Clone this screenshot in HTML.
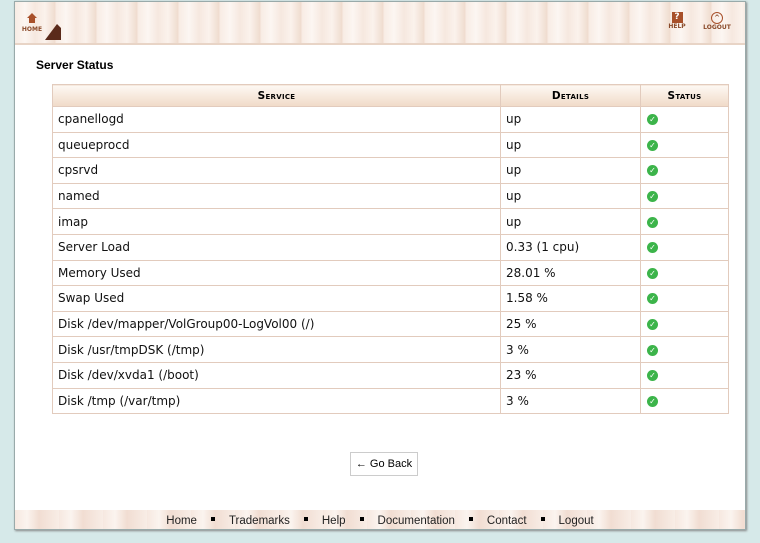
<!DOCTYPE html>
<html><head><style>
body{margin:0;background:#d6e9e9;font-family:"DejaVu Sans","Liberation Sans",sans-serif;width:760px;height:543px;overflow:hidden;position:relative}
.wrap{position:absolute;left:14px;top:1px;width:730px;height:527px;background:#fff;border:1px solid #9aa;box-shadow:1px 1px 2px #888}
.hdr{position:absolute;left:0;top:0;width:730px;height:41px;background:repeating-linear-gradient(90deg,#f8ece4 0,#fcf6f2 10px,#f6e8df 20px,#fbf2ec 30px,#efdccf 40px,#f8ece4 41px);border-bottom:2px solid #e8d4c6}
.ic{position:absolute;font-size:6px;font-weight:bold;color:#8a4a2a;text-align:center}
h1{position:absolute;left:21px;top:56px;margin:0;font-size:12px;font-weight:bold;color:#000;font-family:"Liberation Sans",sans-serif}
table{position:absolute;left:37px;top:82px;width:677px;border-collapse:collapse;font-size:12px}
th{height:21px;background:linear-gradient(#fdf8f3,#f0dac8);font-size:10.5px;font-variant:small-caps;border:1px solid #e2cbbd;padding:0;letter-spacing:.3px}
td{height:24.6px;border:1px solid #e2cbbd;padding:0 0 0 5px;color:#111}
.ok{display:inline-block;width:11px;height:11px;border-radius:50%;background:#3cb44a;color:#fff;font-size:8px;line-height:11px;text-align:center;margin-left:1px;vertical-align:middle}
.btn{position:absolute;left:335px;top:450px;width:66px;height:22px;border:1px solid #ccc;font-size:11px;line-height:22px;text-align:center;font-family:"Liberation Sans",sans-serif}
.ftr{position:absolute;left:0;top:508px;width:730px;height:19px;background:repeating-linear-gradient(90deg,#f6e8e0 0,#fbf4ef 12px,#f1ddd2 24px,#f8ede6 44px);font-size:11.5px;font-family:"Liberation Sans",sans-serif;text-align:center;line-height:22px;color:#222}
.ftr b{display:inline-block;width:4px;height:4px;background:#000;margin:0 14px;vertical-align:3px}
</style></head><body>
<div class="wrap">
<div class="hdr">
<div class="ic" style="left:6px;top:10px;width:22px"><svg width="12" height="12" viewBox="0 0 12 12"><path d="M6 1 1 6h2v5h6V6h2z" fill="#a8502a"/></svg><br>HOME</div>
<svg style="position:absolute;left:30px;top:20px" width="16" height="18"><path d="M0 18 L12 2 L16 6 L16 18Z" fill="#5a2a1a"/></svg>
<div class="ic" style="left:652px;top:10px;width:20px"><div style="width:11px;height:11px;background:#a8502a;color:#fff;font-size:9px;line-height:11px;margin:0 auto">?</div>HELP</div>
<div class="ic" style="left:687px;top:10px;width:30px"><div style="width:10px;height:10px;border:1px solid #a8502a;border-radius:50%;margin:0 auto;font-size:7px;line-height:10px">^</div>LOGOUT</div>
</div>
<h1>Server Status</h1>
<table>
<tr><th style="width:447px">Service</th><th style="width:139px">Details</th><th>Status</th></tr>
<tr><td>cpanellogd</td><td>up</td><td><span class="ok">✓</span></td></tr>
<tr><td>queueprocd</td><td>up</td><td><span class="ok">✓</span></td></tr>
<tr><td>cpsrvd</td><td>up</td><td><span class="ok">✓</span></td></tr>
<tr><td>named</td><td>up</td><td><span class="ok">✓</span></td></tr>
<tr><td>imap</td><td>up</td><td><span class="ok">✓</span></td></tr>
<tr><td>Server Load</td><td>0.33 (1 cpu)</td><td><span class="ok">✓</span></td></tr>
<tr><td>Memory Used</td><td>28.01 %</td><td><span class="ok">✓</span></td></tr>
<tr><td>Swap Used</td><td>1.58 %</td><td><span class="ok">✓</span></td></tr>
<tr><td>Disk /dev/mapper/VolGroup00-LogVol00 (/)</td><td>25 %</td><td><span class="ok">✓</span></td></tr>
<tr><td>Disk /usr/tmpDSK (/tmp)</td><td>3 %</td><td><span class="ok">✓</span></td></tr>
<tr><td>Disk /dev/xvda1 (/boot)</td><td>23 %</td><td><span class="ok">✓</span></td></tr>
<tr><td>Disk /tmp (/var/tmp)</td><td>3 %</td><td><span class="ok">✓</span></td></tr>
</table>
<div class="btn">← Go Back</div>
<div class="ftr">Home<b></b>Trademarks<b></b>Help<b></b>Documentation<b></b>Contact<b></b>Logout</div>
</div>
</body></html>
